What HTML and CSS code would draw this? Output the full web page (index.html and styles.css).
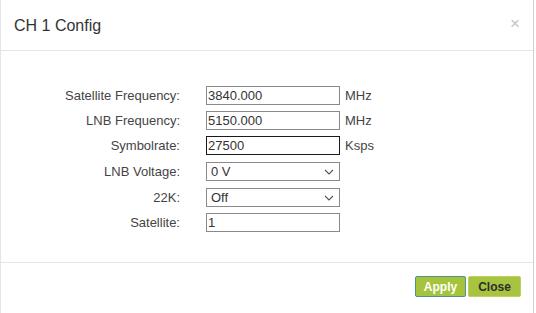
FILE: index.html
```html
<!DOCTYPE html>
<html>
<head>
<meta charset="utf-8">
<link rel="stylesheet" href="styles.css">
</head>
<body>
<div class="modal">
  <div class="modal-header">
    <h4 class="modal-title">CH 1 Config</h4>
    <span class="close">×</span>
  </div>
  <div class="modal-body">
    <div class="form">
      <label class="lbl">Satellite Frequency:</label>
      <input class="field" type="text" value="3840.000">
      <span class="unit">MHz</span>

      <label class="lbl">LNB Frequency:</label>
      <input class="field" type="text" value="5150.000">
      <span class="unit">MHz</span>

      <label class="lbl">Symbolrate:</label>
      <input class="field focused" type="text" value="27500">
      <span class="unit">Ksps</span>

      <label class="lbl">LNB Voltage:</label>
      <div class="select-wrap">
        <select class="field sel"><option>0 V</option></select>
        <svg class="chev" width="10" height="6" viewBox="0 0 10 6"><path d="M1 1 L5 5 L9 1" fill="none" stroke="#555" stroke-width="1.1"/></svg>
      </div>
      <span class="unit"></span>

      <label class="lbl">22K:</label>
      <div class="select-wrap">
        <select class="field sel"><option>Off</option></select>
        <svg class="chev" width="10" height="6" viewBox="0 0 10 6"><path d="M1 1 L5 5 L9 1" fill="none" stroke="#555" stroke-width="1.1"/></svg>
      </div>
      <span class="unit"></span>

      <label class="lbl">Satellite:</label>
      <input class="field" type="text" value="1">
      <span class="unit"></span>
    </div>
  </div>
  <div class="modal-footer">
    <button class="btn btn-apply">Apply</button>
    <button class="btn btn-close">Close</button>
  </div>
</div>
</body>
</html>
```
FILE: styles.css
```css
html, body {
  margin: 0;
  padding: 0;
  background: #ffffff;
}
body {
  font-family: "Liberation Sans", Arial, sans-serif;
  color: #333;
}
.modal {
  width: 532px;
  height: 313px;
  border-left: 1px solid #e4e4e4;
  border-right: 1px solid #cfcfcf;
  background: #fff;
  display: flex;
  flex-direction: column;
  box-sizing: content-box;
}
.modal-header {
  height: 51px;
  border-bottom: 1px solid #e5e5e5;
  display: flex;
  align-items: center;
  justify-content: space-between;
  padding: 0 13px 0 13px;
  box-sizing: border-box;
}
.modal-title {
  margin: 0;
  font-size: 16px;
  font-weight: normal;
  color: #333;
  padding-top: 1px;
}
.close {
  font-size: 17px;
  color: #c4c4c4;
  line-height: 1;
  margin-top: -3px;
}
.modal-body {
  height: 211px;
  padding-top: 35px;
  box-sizing: border-box;
}
.form {
  display: grid;
  grid-template-columns: 179px 134px auto;
  column-gap: 26px;
  row-gap: 6px;
  align-items: center;
  font-size: 13px;
  color: #444;
}
.form .unit {
  margin-left: -21px;
  color: #444;
}
.lbl {
  text-align: right;
  line-height: 19px;
}
.field {
  box-sizing: border-box;
  width: 134px;
  height: 19px;
  margin: 0;
  border: 1px solid #8a8a8a;
  padding: 0 1px;
  font-family: "Liberation Sans", Arial, sans-serif;
  font-size: 13px;
  color: #333;
  background: #fff;
  outline: none;
  border-radius: 0;
}
.field.focused {
  border-color: #1a1a1a;
}
.select-wrap {
  position: relative;
  width: 134px;
  height: 19px;
  margin-top: 1px;
}
.sel {
  -webkit-appearance: none;
  appearance: none;
  padding: 0 4px;
  height: 19px;
}
.chev {
  position: absolute;
  right: 6px;
  top: 7px;
  pointer-events: none;
}
.modal-footer {
  flex: 1;
  border-top: 1px solid #e5e5e5;
  display: flex;
  justify-content: flex-end;
  align-items: flex-start;
  padding: 13px 12px 0 0;
  gap: 2px;
}
.btn {
  height: 21px;
  font-family: "Liberation Sans", Arial, sans-serif;
  font-size: 12px;
  font-weight: bold;
  padding: 0;
  background: #a5c43c;
  border-radius: 2px;
}
.btn-apply {
  width: 51px;
  color: #fff;
  border: 1px solid #4d8f9c;
}
.btn-close {
  width: 53px;
  color: #2e2e2e;
  border: 1px solid #b9d35a;
  background: #a8c33f;
}
```
